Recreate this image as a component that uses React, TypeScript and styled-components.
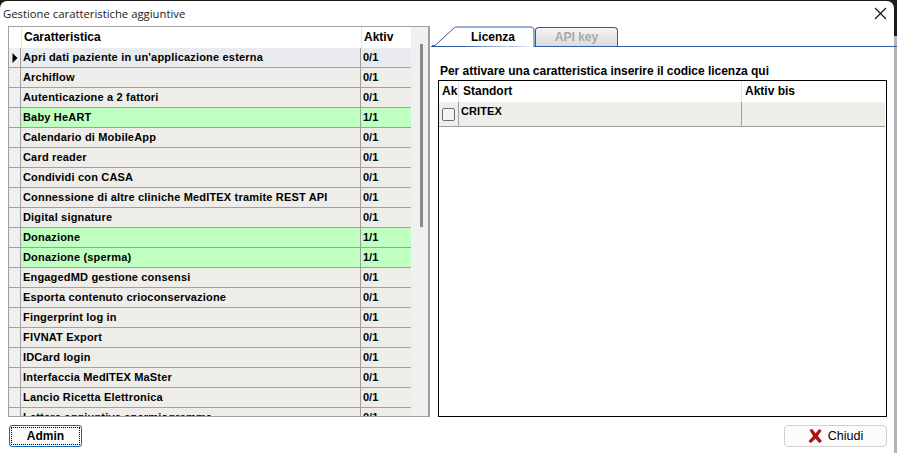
import * as React from "react";
import styled, { createGlobalStyle } from "styled-components";

const GlobalStyle = createGlobalStyle`
  html, body {
    margin: 0;
    padding: 0;
    background: #fff;
  }
`;

const features = [
  { name: "Apri dati paziente in un'applicazione esterna", aktiv: "0/1", current: true },
  { name: "Archiflow", aktiv: "0/1" },
  { name: "Autenticazione a 2 fattori", aktiv: "0/1" },
  { name: "Baby HeART", aktiv: "1/1", on: true },
  { name: "Calendario di MobileApp", aktiv: "0/1" },
  { name: "Card reader", aktiv: "0/1" },
  { name: "Condividi con CASA", aktiv: "0/1" },
  { name: "Connessione di altre cliniche MedITEX tramite REST API", aktiv: "0/1" },
  { name: "Digital signature", aktiv: "0/1" },
  { name: "Donazione", aktiv: "1/1", on: true },
  { name: "Donazione (sperma)", aktiv: "1/1", on: true },
  { name: "EngagedMD gestione consensi", aktiv: "0/1" },
  { name: "Esporta contenuto crioconservazione", aktiv: "0/1" },
  { name: "Fingerprint log in", aktiv: "0/1" },
  { name: "FIVNAT Export", aktiv: "0/1" },
  { name: "IDCard login", aktiv: "0/1" },
  { name: "Interfaccia MedITEX MaSter", aktiv: "0/1" },
  { name: "Lancio Ricetta Elettronica", aktiv: "0/1" },
  { name: "Lettere aggiuntive spermiogramma", aktiv: "0/1" },
];

function App() {
  return (
    <Page>
      <GlobalStyle />
      <Window>
        <TitleBar>
          <Title>Gestione caratteristiche aggiuntive</Title>
          <CloseIcon width="13" height="13" viewBox="0 0 13 13">
            <path d="M1 1 L12 12 M12 1 L1 12" stroke="#111" strokeWidth="1.1" fill="none" />
          </CloseIcon>
        </TitleBar>
        <Body>
          <FeatureGrid>
            <FeatureColumns>
              <HeaderRow>
                <IndicatorHead />
                <NameHead>Caratteristica</NameHead>
                <AktivHead>Aktiv</AktivHead>
              </HeaderRow>
              {features.map((f) => (
                <FeatureRow key={f.name}>
                  <Indicator>
                    {f.current && (
                      <svg width="6" height="10" viewBox="0 0 6 10">
                        <path d="M0.5 0 L5.5 5 L0.5 10 Z" fill="#000" />
                      </svg>
                    )}
                  </Indicator>
                  <NameCell $on={f.on} $current={f.current}>{f.name}</NameCell>
                  <AktivCell $on={f.on} $current={f.current}>{f.aktiv}</AktivCell>
                </FeatureRow>
              ))}
            </FeatureColumns>
            <ScrollTrack>
              <ScrollThumb />
            </ScrollTrack>
          </FeatureGrid>
          <RightPane>
            <TabStrip>
              <ActiveTab>
                <TabShape width="104" height="21" viewBox="0 0 104 21">
                  <path
                    d="M0 19.5 H3 L22 2 Q23 1 25 1 H99 Q101 1 102 3 V21"
                    fill="#fff"
                    stroke="#2f5da0"
                    strokeWidth="1"
                  />
                </TabShape>
                <TabLabel>Licenza</TabLabel>
              </ActiveTab>
              <InactiveTab>API key</InactiveTab>
            </TabStrip>
            <Hint>Per attivare una caratteristica inserire il codice licenza qui</Hint>
            <LicenseBox>
              <LicenseHeader>
                <AkHead>Ak</AkHead>
                <StandortHead>Standort</StandortHead>
                <BisHead>Aktiv bis</BisHead>
              </LicenseHeader>
              <LicenseRow>
                <CheckCell>
                  <CheckBox />
                </CheckCell>
                <StandortCell>CRITEX</StandortCell>
                <BisCell />
              </LicenseRow>
            </LicenseBox>
          </RightPane>
        </Body>
        <Footer>
          <AdminButton>
            <AdminFocus>Admin</AdminFocus>
          </AdminButton>
          <CloseButton>
            <svg width="15" height="16" viewBox="0 0 16 16">
              <path
                d="M1.5 1.5 L4.5 0.5 L8 5 L12 0.5 L14.5 2 L10.5 8 L15 13.5 L12 15.5 L8 11 L3 15.5 L0.5 13.5 L5.5 8 Z"
                fill="#a51516"
              />
            </svg>
            <span>Chiudi</span>
          </CloseButton>
        </Footer>
      </Window>
    </Page>
  );
}

const Page = styled.div`
  width: 897px;
  height: 453px;
  overflow: hidden;
  padding-top: 1px;
  box-sizing: border-box;
  background: linear-gradient(#1c1c1c 0, #1c1c1c 36px, #aeb4ba 36px);
`;

const Window = styled.div`
  width: 894px;
  height: 452px;
  background: #fff;
  border-radius: 7px 7px 0 0;
  display: flex;
  flex-direction: column;
  box-sizing: border-box;
  font-family: "Liberation Sans", Arial, sans-serif;
  color: #000;
`;

const TitleBar = styled.div`
  height: 25px;
  flex: none;
  display: flex;
  align-items: center;
  justify-content: space-between;
  padding: 0 7px 0 3px;
`;

const Title = styled.div`
  font: 400 11.3px "Open Sans", sans-serif;
  color: #1a1a1a;
`;

const CloseIcon = styled.svg`
  display: block;
`;

const Body = styled.div`
  display: flex;
  height: 391px;
  flex: none;
  padding-left: 8px;
`;

const FeatureGrid = styled.div`
  width: 422px;
  height: 391px;
  box-sizing: border-box;
  border: 1px solid #a0a0a0;
  border-right-width: 2px;
  display: flex;
  overflow: hidden;
  flex: none;
`;

const FeatureColumns = styled.div`
  width: 402px;
  flex: none;
`;

const HeaderRow = styled.div`
  display: flex;
  height: 21px;
  background: #fff;
  font-weight: 700;
  font-size: 12px;
  line-height: 20px;
`;

const IndicatorHead = styled.div`
  width: 12px;
  flex: none;
  border-right: 1px solid #e4e4e4;
`;

const NameHead = styled.div`
  width: 339px;
  box-sizing: border-box;
  padding-left: 2px;
  flex: none;
`;

const AktivHead = styled.div`
  flex: 1;
  padding-left: 2px;
  border-left: 1px solid #e4e4e4;
`;

const FeatureRow = styled.div`
  display: flex;
  height: 20px;
  font-weight: 700;
  font-size: 11px;
  line-height: 19px;
  white-space: nowrap;
`;

const Indicator = styled.div`
  width: 12px;
  flex: none;
  box-sizing: border-box;
  height: 20px;
  background: #f0f0f0;
  border-right: 1px solid #a0a0a0;
  border-bottom: 1px solid #a0a0a0;
  display: flex;
  align-items: center;
  justify-content: center;
  padding-left: 1px;
`;

const rowBackground = (on?: boolean, current?: boolean) =>
  on ? "#bfffbf" : current ? "#e9ebee" : "#eeede9";

const NameCell = styled.div<{ $on?: boolean; $current?: boolean }>`
  width: 340px;
  flex: none;
  box-sizing: border-box;
  padding-left: 2px;
  height: 20px;
  letter-spacing: 0.18px;
  background: ${(p) => rowBackground(p.$on, p.$current)};
  border-right: 1px solid #a0a0a0;
  border-bottom: 1px solid #a0a0a0;
`;

const AktivCell = styled.div<{ $on?: boolean; $current?: boolean }>`
  flex: 1;
  height: 20px;
  box-sizing: border-box;
  padding-left: 2px;
  background: ${(p) => rowBackground(p.$on, p.$current)};
  border-bottom: 1px solid #a0a0a0;
`;

const ScrollTrack = styled.div`
  flex: 1;
  background: #f0f0f0;
  position: relative;
`;

const ScrollThumb = styled.div`
  position: absolute;
  left: 9px;
  top: 17px;
  width: 3px;
  height: 183px;
  background: #8a8a8a;
`;

const RightPane = styled.div`
  flex: 1;
  min-width: 0;
  display: flex;
  flex-direction: column;
  padding-left: 8px;
`;

const TabStrip = styled.div`
  display: flex;
  height: 21px;
  flex: none;
  border-bottom: 1px solid #2f5da0;
  margin: 0 -3px 0 -7px;
  padding-left: 1px;
  box-sizing: border-box;
  align-items: flex-end;
`;

const ActiveTab = styled.div`
  width: 103px;
  height: 21px;
  margin-bottom: -1px;
  position: relative;
  flex: none;
  display: flex;
  align-items: center;
  justify-content: center;
`;

const TabShape = styled.svg`
  position: absolute;
  left: 0;
  top: 0;
`;

const TabLabel = styled.span`
  position: relative;
  font-size: 12px;
  font-weight: 700;
  padding-left: 19px;
`;

const InactiveTab = styled.div`
  width: 83px;
  height: 19px;
  flex: none;
  box-sizing: border-box;
  border: 1px solid #2f5da0;
  border-bottom: none;
  border-radius: 4px 4px 0 0;
  background: linear-gradient(#f4f4f4, #dcdcdc);
  color: #a8a8a8;
  font-size: 12px;
  font-weight: 700;
  text-align: center;
  line-height: 19px;
`;

const Hint = styled.div`
  font-size: 12px;
  font-weight: 700;
  line-height: 14px;
  letter-spacing: -0.03px;
  margin: 17px 0 2px 2px;
  white-space: nowrap;
`;

const LicenseBox = styled.div`
  width: 449px;
  height: 337px;
  box-sizing: border-box;
  border: 1px solid #000;
  flex: none;
  padding-right: 1px;
`;

const LicenseHeader = styled.div`
  display: flex;
  height: 21px;
  font-size: 12px;
  font-weight: 700;
  line-height: 21px;
`;

const AkHead = styled.div`
  width: 19px;
  flex: none;
  padding-left: 3px;
  box-sizing: border-box;
  overflow: hidden;
`;

const StandortHead = styled.div`
  width: 283px;
  flex: none;
  box-sizing: border-box;
  padding-left: 4px;
  border-left: 1px solid #e4e4e4;
`;

const BisHead = styled.div`
  flex: 1;
  padding-left: 3px;
  border-left: 1px solid #e4e4e4;
`;

const LicenseRow = styled.div`
  display: flex;
  height: 25px;
  box-sizing: border-box;
  background: #eeede9;
  border-bottom: 1px solid #a0a0a0;
  font-size: 11px;
  font-weight: 700;
`;

const CheckCell = styled.div`
  width: 20px;
  flex: none;
  box-sizing: border-box;
  border-right: 1px solid #a0a0a0;
  display: flex;
  align-items: center;
  padding: 1px 0 0 3px;
`;

const CheckBox = styled.div`
  width: 11px;
  height: 11px;
  border: 1px solid #6e6e6e;
  border-radius: 2px;
  background: #f4f4f4;
`;

const StandortCell = styled.div`
  width: 283px;
  flex: none;
  box-sizing: border-box;
  padding: 3px 0 0 2px;
  line-height: 12px;
  border-right: 1px solid #a0a0a0;
  letter-spacing: 0.1px;
`;

const BisCell = styled.div`
  flex: 1;
`;

const Footer = styled.div`
  display: flex;
  justify-content: space-between;
  padding: 8px 7px 0 9px;
`;

const AdminButton = styled.button`
  width: 73px;
  height: 22px;
  box-sizing: border-box;
  padding: 1px;
  border: 1px solid #0f6cbd;
  border-radius: 3px;
  background: #fcfcfc;
  font: inherit;
  display: block;
`;

const AdminFocus = styled.div`
  height: 100%;
  box-sizing: border-box;
  border: 1px dotted #000;
  font-family: "Liberation Sans", sans-serif;
  font-size: 12px;
  font-weight: 700;
  line-height: 17px;
  text-align: center;
`;

const CloseButton = styled.button`
  width: 103px;
  height: 22px;
  box-sizing: border-box;
  border: 1px solid #d0d0d0;
  border-radius: 4px;
  background: #fcfcfc;
  display: flex;
  align-items: center;
  justify-content: center;
  gap: 5px;
  padding: 0;
  font-family: "Liberation Sans", sans-serif;
  font-size: 12.5px;
  color: #000;
`;

export default App;
